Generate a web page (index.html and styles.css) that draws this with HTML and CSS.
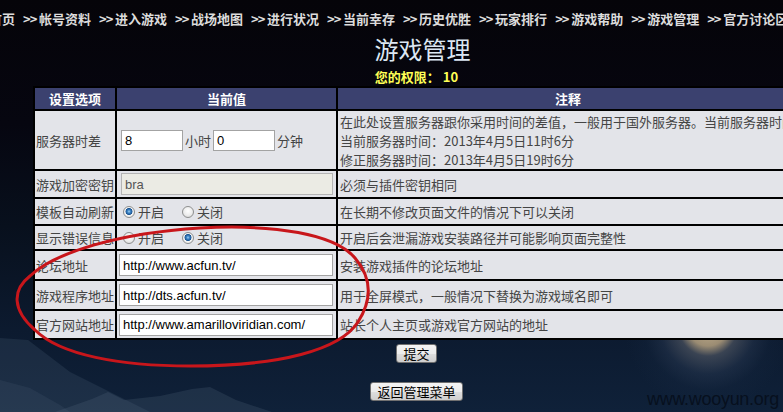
FILE: index.html
```html
<!DOCTYPE html>
<html lang="zh-CN">
<head>
<meta charset="utf-8">
<title>游戏管理</title>
<link rel="stylesheet" href="styles.css">
</head>
<body>
<svg class="scenery" width="783" height="412" viewBox="0 0 783 412" aria-hidden="true">
  <polygon class="ridge-a" points="0,338 28,340 70,372 110,392 150,412 0,412"/>
  <polygon class="ridge-b" points="55,412 92,399 108,392 124,400 160,396 192,389 210,387 236,400 272,412"/>
  <polygon class="ridge-c" points="0,380 30,388 60,405 70,412 0,412"/>
</svg>

<div class="page">
  <nav class="nav">
    <a href="#">首页</a>
    <span class="sep">&gt;&gt;</span><a href="#">帐号资料</a>
    <span class="sep">&gt;&gt;</span><a href="#">进入游戏</a>
    <span class="sep">&gt;&gt;</span><a href="#">战场地图</a>
    <span class="sep">&gt;&gt;</span><a href="#">进行状况</a>
    <span class="sep">&gt;&gt;</span><a href="#">当前幸存</a>
    <span class="sep">&gt;&gt;</span><a href="#">历史优胜</a>
    <span class="sep">&gt;&gt;</span><a href="#">玩家排行</a>
    <span class="sep">&gt;&gt;</span><a href="#">游戏帮助</a>
    <span class="sep">&gt;&gt;</span><a href="#">游戏管理</a>
    <span class="sep">&gt;&gt;</span><a href="#">官方讨论区</a>
  </nav>

  <main class="main">
    <h1 class="title">游戏管理</h1>
    <p class="perm">您的权限： 10</p>

    <table class="settings">
      <thead>
        <tr>
          <th class="c1">设置选项</th>
          <th class="c2">当前值</th>
          <th class="c3">注释</th>
        </tr>
      </thead>
      <tbody>
        <tr class="row-time">
          <td class="label">服务器时差</td>
          <td class="value">
            <div class="time">
              <input class="txt txt-short" type="text" value="8">
              <span>小时</span>
              <input class="txt txt-short" type="text" value="0">
              <span>分钟</span>
            </div>
          </td>
          <td class="note">
            <div class="lines">在此处设置服务器跟你采用时间的差值，一般用于国外服务器。当前服务器时间与本地时间不同时请修改<br>当前服务器时间：2013年4月5日11时6分<br>修正服务器时间：2013年4月5日19时6分</div>
          </td>
        </tr>
        <tr class="row-key">
          <td class="label">游戏加密密钥</td>
          <td class="value"><input class="txt txt-disabled" type="text" value="bra" disabled></td>
          <td class="note">必须与插件密钥相同</td>
        </tr>
        <tr class="row-tpl">
          <td class="label">模板自动刷新</td>
          <td class="value">
            <div class="choice">
              <label class="opt"><input class="radio" type="radio" name="tpl" checked>开启</label>
              <label class="opt"><input class="radio" type="radio" name="tpl">关闭</label>
            </div>
          </td>
          <td class="note">在长期不修改页面文件的情况下可以关闭</td>
        </tr>
        <tr class="row-err">
          <td class="label">显示错误信息</td>
          <td class="value">
            <div class="choice">
              <label class="opt"><input class="radio" type="radio" name="err">开启</label>
              <label class="opt"><input class="radio" type="radio" name="err" checked>关闭</label>
            </div>
          </td>
          <td class="note">开启后会泄漏游戏安装路径并可能影响页面完整性</td>
        </tr>
        <tr class="row-url">
          <td class="label">论坛地址</td>
          <td class="value"><input class="txt txt-long" type="text" value="http://www.acfun.tv/"></td>
          <td class="note">安装游戏插件的论坛地址</td>
        </tr>
        <tr class="row-url">
          <td class="label">游戏程序地址</td>
          <td class="value"><input class="txt txt-long" type="text" value="http://dts.acfun.tv/"></td>
          <td class="note">用于全屏模式，一般情况下替换为游戏域名即可</td>
        </tr>
        <tr class="row-url row-last">
          <td class="label">官方网站地址</td>
          <td class="value"><input class="txt txt-long" type="text" value="http://www.amarilloviridian.com/"></td>
          <td class="note">站长个人主页或游戏官方网站的地址</td>
        </tr>
      </tbody>
    </table>

    <button class="btn btn-submit" type="button">提交</button>
    <button class="btn btn-back" type="button">返回管理菜单</button>
  </main>
</div>

<svg class="annotation" width="783" height="412" viewBox="0 0 783 412" aria-hidden="true">
  <path d="M 200 228 C 275 224, 335 234, 355 258 C 372 278, 372 300, 358 322 C 340 350, 280 366, 190 366 C 120 366, 60 355, 35 330 C 12 310, 12 290, 30 276 C 55 252, 120 233, 200 228 Z"/>
</svg>

<div class="watermark">www.wooyun.org</div>
</body>
</html>
```

FILE: styles.css
```css
* {
  box-sizing: border-box;
}

html,
body {
  margin: 0;
  padding: 0;
}

body {
  position: relative;
  width: 783px;
  height: 412px;
  overflow: hidden;
  font-family: "Noto Sans CJK SC", "Noto Sans", sans-serif;
  font-size: 13px;
  color: #444;
  background:
    radial-gradient(circle at 708px 326px,
      rgba(200, 180, 145, 1) 0,
      rgba(170, 152, 122, 0.9) 20px,
      rgba(95, 100, 110, 0.55) 30px,
      rgba(50, 66, 92, 0.35) 48px,
      rgba(30, 48, 75, 0.15) 64px,
      rgba(20, 36, 62, 0) 84px),
    linear-gradient(to bottom,
      #050409 0%,
      #060610 30%,
      #08101d 55%,
      #0c1a2f 80%,
      #0f2139 100%);
}

.scenery {
  position: absolute;
  left: 0;
  top: 0;
  z-index: 0;
}

.ridge-a {
  fill: rgba(95, 115, 140, 0.18);
}

.ridge-b {
  fill: rgba(90, 108, 130, 0.22);
}

.ridge-c {
  fill: rgba(110, 125, 145, 0.12);
}

.page {
  position: relative;
  z-index: 1;
}

/* top navigation */
.nav {
  display: flex;
  white-space: nowrap;
  margin-left: -11px;
  padding-top: 10px;
  height: 28px;
  line-height: 18px;
  font-weight: bold;
  color: #dcdcdc;
}

.nav a {
  color: inherit;
  text-decoration: none;
}

.sep {
  display: inline-block;
  width: 13px;
  margin: 0 3px 0 8px;
  letter-spacing: -1px;
}

/* main column */
.main {
  margin-left: 33px;
  width: 767px;
}

.title {
  margin: 7px 0 0;
  padding-left: 12px;
  text-align: center;
  font-size: 24px;
  line-height: 28px;
  font-weight: normal;
  color: #dce7f3;
}

.perm {
  margin: 5px 0 0;
  text-align: center;
  font-weight: bold;
  line-height: 17px;
  color: #ffff55;
}

/* settings table */
.settings {
  margin-top: 1px;
  width: 767px;
  table-layout: fixed;
  border-collapse: separate;
  border-spacing: 2px;
  background: #000;
}

.settings th {
  height: 21px;
  padding: 0;
  background: #3b416f;
  color: #fff;
  font-weight: bold;
  line-height: 17px;
  text-align: center;
}

.settings .c1 {
  width: 80px;
}

.settings .c2 {
  width: 219px;
}

.settings .c3 {
  width: 460px;
}

.settings td {
  padding: 0;
  background: #e3e4e9;
  vertical-align: middle;
  line-height: 17px;
  white-space: nowrap;
}

.settings td.label {
  padding-left: 1px;
  color: #444;
}

.settings td.value {
  padding-left: 2px;
}

.settings td.note {
  padding-left: 2px;
  color: #454545;
}

.row-time td {
  height: 58px;
}

.row-key td {
  height: 26px;
}

.row-tpl td {
  height: 25px;
}

.row-err td {
  height: 23px;
}

.row-url td {
  height: 28px;
}

.row-url.row-last td {
  height: 27px;
}

.lines {
  line-height: 19px;
}

/* form controls */
.time {
  display: flex;
  align-items: center;
  gap: 2px;
  padding-left: 2px;
  color: #444;
}

.txt {
  margin: 0;
  height: 22px;
  padding: 0 3px;
  border: 1px solid #a3a3a3;
  background: #fff;
  color: #000;
  font: 13px "Liberation Sans", Arial, sans-serif;
}

.txt-short {
  width: 62px;
  height: 21px;
}

.txt-disabled {
  width: 212px;
  margin-left: 2px;
  background: #ebebe4;
  border-color: #b4b4b4;
  color: #555;
}

.txt-long {
  width: 214px;
}

.choice {
  display: flex;
  align-items: center;
  padding-left: 4px;
  color: #444;
}

.opt {
  display: inline-flex;
  align-items: center;
  gap: 3px;
}

.opt + .opt {
  margin-left: 18px;
}

.radio {
  appearance: none;
  -webkit-appearance: none;
  width: 12px;
  height: 12px;
  margin: 0;
  border: 1px solid #8e8f8f;
  border-radius: 50%;
  background: radial-gradient(circle at 50% 40%, #ffffff 0, #ececec 55%, #cfcfcf 100%);
}

.radio:checked {
  background: radial-gradient(circle at 50% 45%,
    #9fd0f2 0,
    #3b82c4 1.6px,
    #1d5592 3.2px,
    #f5f5f5 3.8px,
    #dedede 100%);
}

/* buttons */
.btn {
  display: block;
  height: 19px;
  margin: 4px auto 0;
  padding: 0 6px;
  border: 1px solid #707070;
  border-radius: 3px;
  background: linear-gradient(to bottom, #f4f4f4 0, #ececec 50%, #dedede 51%, #cfcfcf 100%);
  color: #000;
  font-family: "Noto Sans CJK SC", sans-serif;
  font-size: 13px;
  line-height: 17px;
}

.btn-back {
  margin-top: 19px;
}

/* overlays */
.annotation {
  position: absolute;
  left: 0;
  top: 0;
  z-index: 2;
  pointer-events: none;
}

.annotation path {
  fill: none;
  stroke: #c8161b;
  stroke-width: 3;
  stroke-linejoin: round;
}

.watermark {
  position: absolute;
  left: 647px;
  top: 390px;
  z-index: 2;
  font-family: "Liberation Sans", Arial, sans-serif;
  font-size: 18px;
  line-height: 18px;
  letter-spacing: -0.3px;
  color: #07101e;
  white-space: nowrap;
}
```
